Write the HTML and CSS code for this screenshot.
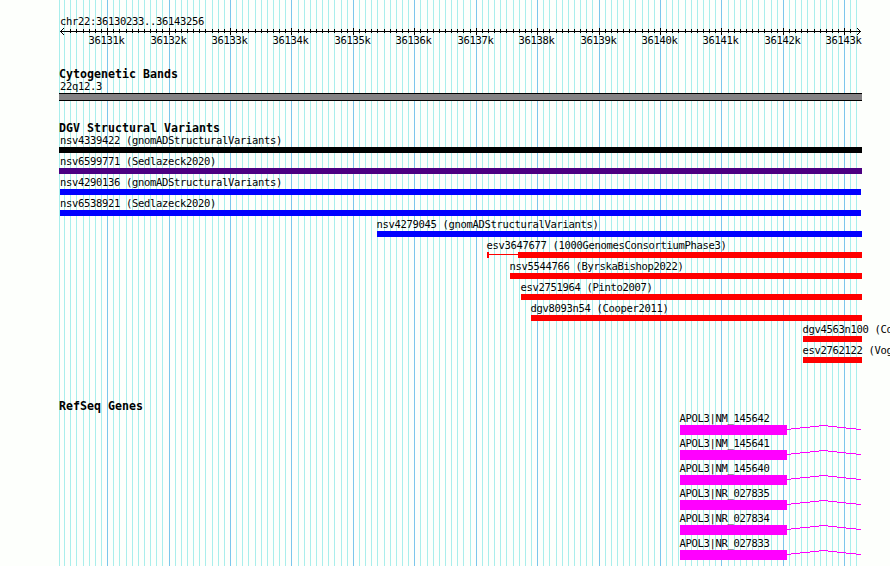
FILE: index.html
```html
<!DOCTYPE html>
<html lang="en">
<head>
  <meta charset="UTF-8">
  <title>chr22:36130233..36143256</title>
  <link rel="stylesheet" href="styles.css">
</head>
<body>
  <div class="browser">
    <svg class="grid" id="grid" width="890" height="566" shape-rendering="crispEdges"></svg>
    <div class="ruler">
      <div class="label">chr22:36130233..36143256</div>
      <svg class="scale" id="scale" width="803" height="24" shape-rendering="crispEdges"></svg>
    </div>
    <div class="track cyto">
      <h2>Cytogenetic Bands</h2>
      <div class="label">22q12.3</div>
      <div class="band"></div>
    </div>
    <div class="track">
      <h2>DGV Structural Variants</h2>
      <div id="variants"></div>
    </div>
    <div class="track genes">
      <h2>RefSeq Genes</h2>
      <div id="genes"></div>
    </div>
  </div>
  <script src="script.js"></script>
</body>
</html>
```
FILE: styles.css
```css
* {
  box-sizing: border-box;
  margin: 0;
  padding: 0;
}
body {
  background: #fdfffc;
  color: #000;
  overflow: hidden;
}
.browser {
  position: relative;
  width: 890px;
  height: 566px;
  padding: 15px 0 0 59px;
  overflow: hidden;
}
.grid {
  position: absolute;
  top: 0;
  left: 0;
  z-index: -1;
}
.minor {
  fill: #a9eeec;
}
.major {
  fill: #7cc6ec;
}
.label,
.scale text {
  font-family: "DejaVu Sans Mono", monospace;
  font-size: 10.5px;
  letter-spacing: -0.32px;
}
.label {
  height: 12px;
  line-height: 13px;
  padding-left: 1px;
  white-space: pre;
}
.ruler {
  height: 53px;
}
.scale {
  display: block;
  overflow: visible;
}
.track h2 {
  height: 12px;
  font: bold 11.6px/13px "DejaVu Sans Mono", monospace;
  letter-spacing: 0.02px;
  white-space: pre;
}
.cyto {
  height: 54px;
}
.band {
  width: 803px;
  height: 8px;
  margin-top: 1px;
  background: #848284;
  border: 1px solid #000;
  border-width: 1px 0;
}
.variant {
  height: 21px;
}
.bar {
  width: 100%;
  height: 6px;
  margin-top: 1px;
}
.black {
  background: #000;
}
.purple {
  background: #4b0082;
}
.blue {
  background: #00f;
}
.red {
  background: #f00;
}
/* uncertain start: a cap and a thin line ahead of the solid bar */
.range {
  background:
    linear-gradient(#f00, #f00) 0 0 / 2px 6px no-repeat,
    linear-gradient(#f00, #f00) 0 2px / 31px 1px no-repeat,
    linear-gradient(#f00, #f00) 31px 0 / 344px 6px no-repeat;
}
.genes {
  margin-top: 35px;
}
.gene {
  height: 25px;
  margin-left: 620px;
}
.gene .label {
  padding-left: 0.5px;
}
.gene svg {
  display: block;
  margin-top: 1px;
}
```
FILE: script.js
```js
const START = 36130233;
const END = 36143256;
const SCALE = 800 / (END - START + 1);

function toX(pos) {
  return Math.round(60 + (pos - START) * SCALE);
}

let grid = '<rect class="minor" x="59" y="0" width="1" height="566"/>';
let ticks = '<rect x="1" y="4" width="801" height="1"/>';
// arrow heads, one pixel out per step
for (let i = 1; i < 4; i++) {
  for (const x of [1 + i, 801 - i]) {
    ticks += `<rect x="${x}" y="${4 - i}" width="1" height="1"/><rect x="${x}" y="${4 + i}" width="1" height="1"/>`;
  }
}
for (let pos = 36130300; pos <= END; pos += 100) {
  const x = toX(pos);
  const major = pos % 1000 === 0;
  grid += `<rect class="${major ? 'major' : 'minor'}" x="${x}" y="0" width="1" height="566"/>`;
  // no ticks under the arrow heads
  if (x > 65 && x < 855) {
    ticks += `<rect x="${x - 59}" y="${major ? 1 : 2}" width="1" height="${major ? 7 : 4}"/>`;
  }
  if (major) {
    ticks += `<text x="${x - 59 - 18.5}" y="17">${pos / 1000}k</text>`;
  }
}
document.getElementById('grid').innerHTML = grid;
document.getElementById('scale').innerHTML = ticks;

// name, left, right, colour
const variants = [
  ['nsv4339422 (gnomADStructuralVariants)', 59, 862, 'black'],
  ['nsv6599771 (Sedlazeck2020)', 59, 862, 'purple'],
  ['nsv4290136 (gnomADStructuralVariants)', 60, 861, 'blue'],
  ['nsv6538921 (Sedlazeck2020)', 60, 861, 'blue'],
  ['nsv4279045 (gnomADStructuralVariants)', 377, 862, 'blue'],
  ['esv3647677 (1000GenomesConsortiumPhase3)', 487, 862, 'range'],
  ['nsv5544766 (ByrskaBishop2022)', 510, 862, 'red'],
  ['esv2751964 (Pinto2007)', 521, 862, 'red'],
  ['dgv8093n54 (Cooper2011)', 531, 862, 'red'],
  ['dgv4563n100 (Co', 803, 862, 'red'],
  ['esv2762122 (Vog', 803, 862, 'red']
];
document.getElementById('variants').innerHTML = variants.map(([name, left, right, color]) => `
  <div class="variant" style="margin-left: ${left - 59}px; width: ${right - left}px">
    <div class="label" style="padding-left: ${left === 59 ? 1 : 0}px; margin-left: ${left > 60 ? -0.5 : 0}px">${name}</div>
    <div class="bar ${color}"></div>
  </div>`).join('');

const genes = ['NM_145642', 'NM_145641', 'NM_145640', 'NR_027835', 'NR_027834', 'NR_027833'];
document.getElementById('genes').innerHTML = genes.map(id => `
  <div class="gene">
    <div class="label">APOL3|${id}</div>
    <svg width="183" height="10" shape-rendering="crispEdges">
      <rect x="1" width="107" height="10" fill="#f0f"/>
      <path d="M108 4.5H112M112 3.5H121M121 2.5H131M131 1.5H140M140 .5H149M149 1.5H158M158 2.5H167M167 3.5H177M177 4.5H182" stroke="#f0f"/>
    </svg>
  </div>`).join('');
```
